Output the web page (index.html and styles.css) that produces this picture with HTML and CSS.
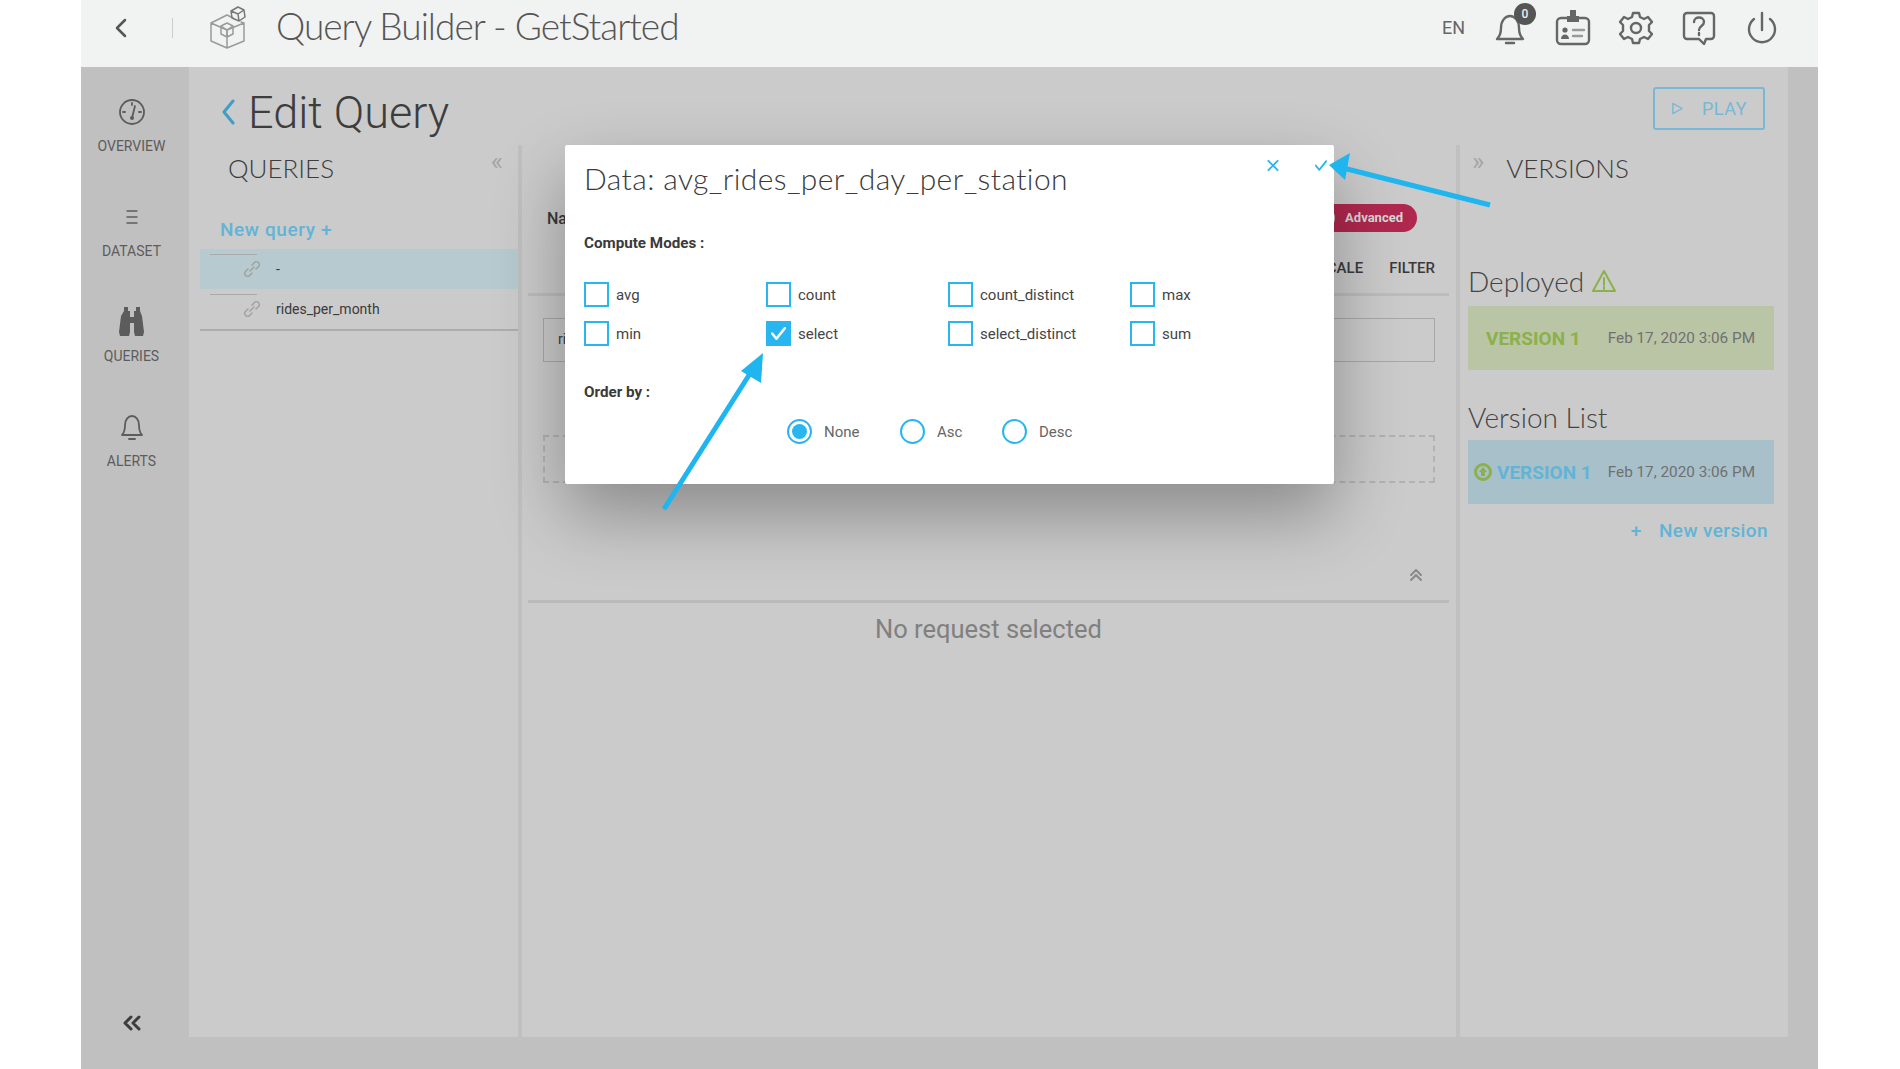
FILE: index.html
```html
<!DOCTYPE html>
<html>
<head>
    <title>Query Builder - GetStarted</title>
    <link rel="stylesheet" href="styles.css">
</head>
<body>
    <div class="app">
        <header class="topbar">
            <svg class="back-icon" viewBox="0 0 14 20"><path d="M11 2 3 10l8 8" /></svg>
            <span class="top-sep"></span>
            <svg class="logo" viewBox="0 0 42 44">
                <path d="M25 12 19 9 3 17v18l16 7 17-7V17l-3-1M3 17l16 7M36 17l-17 7M19 24v18" class="faint" />
                <path d="m19 17 6 3v8l-6 3-6-3v-8zM13 20l6 4 6-4M19 24v7" class="faint" />
                <path d="m30 1 6 3 1 7-6 4-7-3-1-7zM23 5l7 3 6-4M30 8l1 7" />
            </svg>
            <h1 class="app-title">Query Builder - GetStarted</h1>
            <div class="top-actions">
                <span class="lang">EN</span>
                <div class="top-icon bell">
                    <svg viewBox="0 0 36 36"><path d="M5 29c3-3 4-6 4-11 0-7 4-12 9-12s9 5 9 12c0 5 1 8 4 11zM14 33h8" /></svg>
                    <span class="badge">0</span>
                </div>
                <div class="top-icon">
                    <svg viewBox="0 0 36 36">
                        <rect x="2" y="8" width="32" height="26" rx="4" />
                        <path class="solid" d="M15 0h6v6h3v6H12V6h3zM6 29c0-6 8-6 8 0z" />
                        <circle class="solid" cx="10" cy="20" r="2.6" />
                        <path class="faint" d="M18 20h11M18 26h9" />
                    </svg>
                </div>
                <div class="top-icon">
                    <svg viewBox="0 0 36 36"><path d="M15 3h6l1 4 4 2 4-2 4 5-3 3v6l3 3-4 5-4-2-4 2-1 4h-6l-1-4-4-2-4 2-4-5 3-3v-6L2 12l4-5 4 2 4-2z" /><circle cx="18" cy="18" r="5" /></svg>
                </div>
                <div class="top-icon">
                    <svg viewBox="0 0 36 36"><path d="M6 3h24a3 3 0 0 1 3 3v20a3 3 0 0 1-3 3h-5l-2 5-5-5H6a3 3 0 0 1-3-3V6a3 3 0 0 1 3-3z" /><path d="M13 12c0-6 10-6 10 0 0 4-5 4-5 8M18 23v2" /></svg>
                </div>
                <div class="top-icon">
                    <svg viewBox="0 0 36 36"><path d="M18 3v17M10 9a13 13 0 1 0 16 0" /></svg>
                </div>
            </div>
        </header>

        <div class="workspace">
            <nav class="sidebar">
                <a class="nav-item">
                    <svg viewBox="0 0 30 30"><circle cx="15" cy="15" r="12" /><path d="M15 21 18 9M6 15h2M22 15h2M15 6v2" /><circle cx="15" cy="21" r="2" class="solid" /></svg>
                    <span>OVERVIEW</span>
                </a>
                <a class="nav-item">
                    <svg viewBox="0 0 30 30"><path class="thin" d="M10 9h10M10 15h10M10 21h10" /></svg>
                    <span>DATASET</span>
                </a>
                <a class="nav-item">
                    <svg viewBox="0 0 30 30"><path class="solid" d="M7 0h4v4h2v6h4V4h2V0h4v4l2 5 2 16-1 4H18l-1-4v-9h-4v9l-1 4H3l-1-4 2-16 3-5z" /></svg>
                    <span>QUERIES</span>
                </a>
                <a class="nav-item">
                    <svg viewBox="0 0 30 30"><path d="M5 23c2-2 3-4 3-10 0-5 3-9 7-9s7 4 7 9c0 6 1 8 3 10zM12 27h6" /></svg>
                    <span>ALERTS</span>
                </a>
                <svg class="collapse-nav" viewBox="0 0 20 16"><path d="M9 2 3 8l6 6M17 2l-6 6 6 6" /></svg>
            </nav>

            <main class="content">
                <div class="page-head">
                    <svg class="head-back" viewBox="0 0 14 26"><path d="M12 2 3 13l9 11" /></svg>
                    <h2 class="page-title">Edit Query</h2>
                    <button class="play-btn">
                        <svg viewBox="0 0 14 14"><path d="M2 1.5 12 7 2 12.5z" /></svg>
                        PLAY
                    </button>
                </div>

                <div class="columns">
                    <section class="queries">
                        <div class="panel-head">
                            <h3 class="panel-title">QUERIES</h3>
                            <span class="panel-toggle">«</span>
                        </div>
                        <a class="new-query">New query +</a>
                        <div class="query-row selected">
                            <svg class="link-icon" viewBox="0 0 20 20"><path d="m8 12 4-4M6 10l-3 3a3 3 0 0 0 4 4l3-3M14 10l3-3a3 3 0 0 0-4-4l-3 3" /></svg>
                            <span>-</span>
                        </div>
                        <div class="query-row">
                            <svg class="link-icon" viewBox="0 0 20 20"><path d="m8 12 4-4M6 10l-3 3a3 3 0 0 0 4 4l3-3M14 10l3-3a3 3 0 0 0-4-4l-3 3" /></svg>
                            <span>rides_per_month</span>
                        </div>
                    </section>

                    <section class="middle">
                        <div class="name-row">
                            <span class="name-label">Name</span>
                            <span class="advanced">Advanced</span>
                        </div>
                        <div class="tabs">
                            <span>SCALE</span>
                            <span>FILTER</span>
                        </div>
                        <div class="query-input">rides</div>
                        <div class="drop-zone"></div>
                        <div class="result-toggle">
                            <svg viewBox="0 0 14 14"><path d="m2 7 5-5 5 5M2 12l5-5 5 5" /></svg>
                        </div>
                        <p class="empty-note">No request selected</p>
                    </section>

                    <section class="versions">
                        <div class="panel-head versions-head">
                            <span class="panel-toggle">»</span>
                            <h3 class="panel-title">VERSIONS</h3>
                        </div>
                        <h4 class="version-heading deployed-heading">
                            Deployed
                            <svg viewBox="0 0 26 24"><path d="M13 2 2 22h22zM13 9v7M13 18v2" /></svg>
                        </h4>
                        <div class="version-card deployed">
                            <span class="version-name">VERSION 1</span>
                            <span class="version-date">Feb 17, 2020 3:06 PM</span>
                        </div>
                        <h4 class="version-heading">Version List</h4>
                        <div class="version-card listed">
                            <svg class="version-status" viewBox="0 0 20 20"><circle cx="10" cy="10" r="7.5" /><path class="solid" d="m10 5 4 5h-2v4H8v-4H6z" /></svg>
                            <span class="version-name">VERSION 1</span>
                            <span class="version-date">Feb 17, 2020 3:06 PM</span>
                        </div>
                        <a class="new-version"><b>+</b> New version</a>
                    </section>
                </div>
            </main>
        </div>

        <div class="modal">
            <div class="modal-actions">
                <svg viewBox="0 0 14 14"><path d="m2 2 10 10M12 2 2 12" /></svg>
                <svg viewBox="0 0 16 14"><path d="m2 7 4 5 8-10" /></svg>
            </div>
            <h2 class="modal-title">Data: avg_rides_per_day_per_station</h2>
            <p class="field-label">Compute Modes :</p>
            <div class="mode-grid">
                <label class="mode"><span class="check"></span>avg</label>
                <label class="mode"><span class="check"></span>count</label>
                <label class="mode"><span class="check"></span>count_distinct</label>
                <label class="mode"><span class="check"></span>max</label>
                <label class="mode"><span class="check"></span>min</label>
                <label class="mode">
                    <span class="check checked"><svg viewBox="0 0 20 20"><path d="m4 10 4 5 8-10" /></svg></span>select
                </label>
                <label class="mode"><span class="check"></span>select_distinct</label>
                <label class="mode"><span class="check"></span>sum</label>
            </div>
            <p class="field-label order-label">Order by :</p>
            <div class="order-row">
                <label class="order"><span class="radio on"></span>None</label>
                <label class="order"><span class="radio"></span>Asc</label>
                <label class="order"><span class="radio"></span>Desc</label>
            </div>
        </div>

        <svg class="arrows" viewBox="0 0 1737 1069">
            <path class="arrow-line" d="M1409 205 1262 168" />
            <path class="arrow-head" d="m1248 165 21-12-5 27z" />
            <path class="arrow-line" d="m583 509 87-137" />
            <path class="arrow-head" d="m682 353-2 30-20-12z" />
        </svg>
    </div>
</body>
</html>
```

FILE: styles.css
```css
:root {
    --panel-bg: #cbcbcb;
    --shell-bg: #c0c0c0;
    --accent: #29b6f0;
    --muted-accent: #62b4d6;
    --text-dark: #3a3a3a;
    --text-mid: #5c5c5c;
}

* {
    box-sizing: border-box;
}

body {
    margin: 0;
    background-color: #fff;
    font-family: Roboto, Arial, sans-serif;
    color: var(--text-dark);
}

svg {
    fill: none;
    stroke: currentColor;
    stroke-width: 2;
    stroke-linecap: round;
    stroke-linejoin: round;
}

svg .solid {
    fill: currentColor;
    stroke: none;
}

svg .faint {
    stroke: #9a9a9a;
}

h1, h2, h3, h4, p {
    margin: 0;
    font-weight: 400;
}

.app {
    position: relative;
    width: 1737px;
    height: 1069px;
    margin-left: 81px;
    background-color: var(--shell-bg);
    overflow: hidden;
    display: flex;
    flex-direction: column;
}

/* top bar */
.topbar {
    height: 67px;
    flex: none;
    padding-bottom: 12px;
    display: flex;
    align-items: center;
    background-color: #f1f2f2;
    color: #666;
}

.back-icon {
    width: 14px;
    height: 20px;
    margin-left: 33px;
    stroke-width: 2.5;
    color: #555;
}

.top-sep {
    width: 1px;
    height: 20px;
    margin-left: 44px;
    background-color: #ccc;
}

.logo {
    width: 42px;
    height: 44px;
    margin-left: 35px;
    stroke-width: 1.5;
    color: #777;
}

.app-title {
    margin-left: 26px;
    margin-top: -4px;
    font-family: Lato, sans-serif;
    font-weight: 300;
    font-size: 37px;
    letter-spacing: -1px;
    color: #555;
}

.top-actions {
    margin-left: auto;
    margin-right: 38px;
    display: flex;
    align-items: center;
    gap: 27px;
}

.lang {
    font-size: 18px;
}

.top-icon {
    position: relative;
    width: 36px;
    height: 36px;
    color: #666;
}

.top-icon svg {
    display: block;
    width: 36px;
    height: 36px;
    stroke-width: 2.4;
}

.badge {
    position: absolute;
    top: -7px;
    right: -8px;
    width: 22px;
    height: 22px;
    border-radius: 50%;
    background-color: #555;
    color: #eee;
    font-size: 12px;
    font-weight: 500;
    line-height: 22px;
    text-align: center;
}

/* body */
.workspace {
    flex: 1;
    display: flex;
    padding: 0 30px 32px 0;
}

.sidebar {
    position: relative;
    width: 108px;
    flex: none;
    padding: 30px 7px 0 0;
    display: flex;
    flex-direction: column;
    align-items: center;
}

.nav-item {
    width: 100%;
    height: 105px;
    display: flex;
    flex-direction: column;
    align-items: center;
    gap: 11px;
    font-size: 14px;
    color: var(--text-mid);
}

.nav-item svg {
    width: 30px;
    height: 30px;
    stroke-width: 1.8;
}

.nav-item svg .thin {
    stroke-width: 1.4;
}

.collapse-nav {
    position: absolute;
    left: 41px;
    bottom: 6px;
    width: 20px;
    height: 16px;
    stroke-width: 3;
    color: #3c3c3c;
}

.content {
    flex: 1;
    background-color: var(--panel-bg);
    display: flex;
    flex-direction: column;
    min-width: 0;
}

.page-head {
    height: 78px;
    flex: none;
    display: flex;
    align-items: flex-start;
    padding: 20px 23px 0 32px;
}

.head-back {
    width: 14px;
    height: 26px;
    margin-top: 12px;
    stroke-width: 3;
    color: #3f9dc6;
}

.page-title {
    margin-left: 13px;
    margin-top: 1px;
    font-family: Roboto, sans-serif;
    font-weight: 300;
    font-size: 45px;
    line-height: 50px;
    color: #3d3d3d;
}

.play-btn {
    margin-left: auto;
    width: 112px;
    height: 43px;
    display: flex;
    align-items: center;
    justify-content: center;
    gap: 18px;
    background: none;
    border: 2px solid #78b8d4;
    border-radius: 3px;
    color: #78b8d4;
    font-family: Roboto, sans-serif;
    font-size: 18px;
    letter-spacing: 0.5px;
}

.play-btn svg {
    width: 13px;
    height: 13px;
    stroke-width: 1.5;
}

.columns {
    flex: 1;
    display: flex;
    min-height: 0;
}

.queries {
    width: 333px;
    flex: none;
    padding-left: 11px;
    border-right: 4px solid #c0c0c0;
}

.panel-head {
    height: 46px;
    display: flex;
    align-items: center;
    padding-left: 28px;
}

.panel-title {
    font-family: Lato, sans-serif;
    font-weight: 300;
    font-size: 26px;
    color: #3d3d3d;
}

.panel-toggle {
    font-size: 26px;
    line-height: 22px;
    margin: -14px 0 0 auto;
    padding-right: 15px;
    color: #a5a5a5;
}

.new-query {
    display: block;
    margin: 27px 0 0 20px;
    font-size: 19px;
    font-weight: 500;
    letter-spacing: 0.6px;
    line-height: 24px;
    color: var(--muted-accent);
}

.query-row {
    position: relative;
    height: 40px;
    display: flex;
    align-items: center;
    padding-left: 42px;
    font-size: 14px;
    color: #3a3a3a;
}

.query-row::before {
    content: "";
    position: absolute;
    top: 5px;
    left: 10px;
    width: 47px;
    height: 1px;
    background-color: #aaa;
}

.query-row.selected {
    margin-top: 7px;
    background-color: #b6cacf;
}

.query-row:last-child {
    border-bottom: 2px solid #adadad;
    height: 42px;
}

.link-icon {
    width: 20px;
    height: 20px;
    margin-right: 14px;
    stroke-width: 1.4;
    color: #a0a0a0;
}

/* middle column, mostly under the dialog */
.middle {
    flex: 1;
    min-width: 0;
    padding: 0 7px 0 6px;
}

.name-row {
    height: 44px;
    margin-top: 51px;
    display: flex;
    align-items: center;
    justify-content: space-between;
    padding: 0 32px 0 19px;
}

.name-label {
    font-size: 16px;
    font-weight: 500;
}

.advanced {
    position: relative;
    height: 28px;
    padding: 0 14px 0 40px;
    border-radius: 14px;
    background-color: #b0284f;
    color: #d8d8d8;
    font-size: 13px;
    font-weight: 700;
    line-height: 28px;
}

.advanced::before {
    content: "";
    position: absolute;
    top: 2px;
    left: 6px;
    width: 24px;
    height: 24px;
    border-radius: 50%;
    background-color: #c4c4c4;
}

.tabs {
    height: 56px;
    padding: 19px 14px 0 0;
    display: flex;
    justify-content: flex-end;
    gap: 26px;
    border-bottom: 3px solid #bdbdbd;
    font-size: 15px;
    font-weight: 500;
}

.query-input {
    height: 44px;
    margin: 22px 14px 0 15px;
    padding: 12px 14px;
    border: 1px solid #a8a8a8;
    font-size: 14px;
}

.drop-zone {
    height: 48px;
    margin: 73px 14px 0 15px;
    border: 2px dashed #b2b2b2;
}

.result-toggle {
    height: 120px;
    padding: 85px 20px 0 0;
    display: flex;
    justify-content: flex-end;
    border-bottom: 3px solid #bababa;
    color: #8a8a8a;
}

.result-toggle svg {
    width: 14px;
    height: 14px;
    margin-right: 6px;
}

.empty-note {
    margin-top: 10px;
    font-size: 25.5px;
    line-height: 32px;
    text-align: center;
    color: #808080;
}

.versions {
    width: 332px;
    flex: none;
    padding: 0 14px 0 8px;
    border-left: 4px solid #c0c0c0;
}

.versions-head {
    padding-left: 4px;
}

.versions-head .panel-toggle {
    margin: -14px 0 0;
    padding-right: 22px;
}

.version-heading {
    height: 34px;
    font-family: Lato, sans-serif;
    font-weight: 300;
    font-size: 28px;
    line-height: 34px;
    color: #444;
    white-space: nowrap;
}

.deployed-heading {
    margin-top: 73px;
    display: flex;
    align-items: center;
    gap: 7px;
}

.deployed-heading svg {
    width: 26px;
    height: 24px;
    color: #8cb04a;
}

.version-card {
    height: 64px;
    margin: 8px 0 30px;
    padding-left: 18px;
    display: flex;
    align-items: center;
    font-weight: 700;
    font-size: 19px;
}

.version-card.deployed {
    background-color: #bac5a5;
    color: #8cb04a;
}

.version-card.listed {
    margin: 6px 0 0;
    padding-left: 5px;
    background-color: #a8c0c9;
    color: #62b4d6;
}

.version-status {
    width: 20px;
    height: 20px;
    margin-right: 4px;
    color: #8cb04a;
    stroke-width: 3;
}

.version-date {
    margin-left: auto;
    padding-right: 19px;
    font-size: 15.3px;
    font-weight: 400;
    color: #707070;
}

.new-version {
    display: block;
    margin-top: 16px;
    padding-right: 6px;
    font-size: 19px;
    font-weight: 500;
    letter-spacing: 0.4px;
    line-height: 22px;
    text-align: right;
    color: var(--muted-accent);
}

.new-version b {
    margin-right: 12px;
    font-weight: 500;
}

/* dialog */
.modal {
    position: absolute;
    top: 145px;
    left: 484px;
    width: 769px;
    height: 339px;
    padding: 0 19px;
    background-color: #fff;
    border-radius: 2px;
    box-shadow: 0 30px 70px rgba(0, 0, 0, 0.32);
}

.modal-actions {
    position: absolute;
    top: 14px;
    right: 6px;
    display: flex;
    gap: 34px;
    color: var(--accent);
}

.modal-actions svg {
    width: 14px;
    height: 13px;
    stroke-width: 2;
}

.modal-title {
    padding-top: 11px;
    font-family: Lato, sans-serif;
    font-weight: 300;
    font-size: 30px;
    letter-spacing: 0.4px;
    line-height: 44px;
    color: #3a3a3a;
}

.field-label {
    margin-top: 33px;
    font-size: 15.2px;
    font-weight: 700;
    line-height: 20px;
    color: #3a3a3a;
}

.mode-grid {
    margin-top: 29px;
    display: grid;
    grid-template-columns: repeat(4, 182px);
    row-gap: 14px;
}

.mode {
    height: 25px;
    display: flex;
    align-items: center;
    gap: 7px;
    font-size: 15px;
    color: #444;
}

.check {
    width: 25px;
    height: 25px;
    flex: none;
    border: 2px solid var(--accent);
}

.check.checked {
    background-color: var(--accent);
    color: #fff;
}

.check svg {
    display: block;
    width: 21px;
    height: 21px;
    stroke-width: 2.4;
}

.order-label {
    margin-top: 36px;
}

.order-row {
    margin: 17px 0 0 203px;
    display: flex;
}

.order {
    height: 25px;
    display: flex;
    align-items: center;
    gap: 12px;
    font-size: 15px;
    color: #666;
}

.order:nth-child(1) {
    width: 113px;
}

.order:nth-child(2) {
    width: 102px;
}

.radio {
    position: relative;
    width: 25px;
    height: 25px;
    border: 2px solid var(--accent);
    border-radius: 50%;
}

.radio.on::after {
    content: "";
    position: absolute;
    inset: 3px;
    border-radius: 50%;
    background-color: var(--accent);
}

/* annotation arrows on top of the screenshot */
.arrows {
    position: absolute;
    top: 0;
    left: 0;
    width: 1737px;
    height: 1069px;
    pointer-events: none;
}

.arrow-line {
    stroke: #1fb5ee;
    stroke-width: 5;
    stroke-linecap: butt;
}

.arrow-head {
    fill: #1fb5ee;
    stroke: none;
}
```
